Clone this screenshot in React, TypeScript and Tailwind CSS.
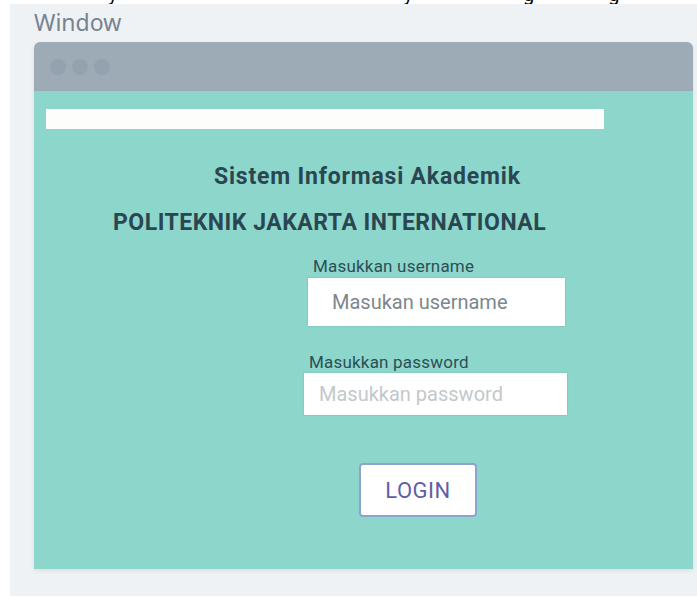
import React from "react";

const Field = ({
  label,
  placeholder,
  labelClass,
  inputClass,
}: {
  label: string;
  placeholder: string;
  labelClass: string;
  inputClass: string;
}) => (
  <div className="flex flex-col">
    <label className={`text-[17px] leading-none tracking-[0.2px] text-[#2c4f55] ${labelClass}`}>
      {label}
    </label>
    <input
      placeholder={placeholder}
      className={`bg-white outline-none text-[20px] shadow-[0_0_2px_rgba(0,0,0,0.15)] ${inputClass}`}
    />
  </div>
);

export default function App() {
  return (
    <div className="w-[697px] h-[597px] bg-white overflow-hidden font-['Roboto',sans-serif]">
      {/* line of text above the panel, cut off so only descenders show */}
      <div className="h-[4px] overflow-hidden">
        <div className="flex text-[20px] leading-none text-black -mt-[16px]">
          <span className="ml-[108px]">y</span>
          <span className="ml-[286px]">y</span>
          <span className="ml-[110px]">g</span>
          <span className="ml-[74px]">g</span>
        </div>
      </div>

      <div className="ml-[10px] h-[592px] bg-[#eef2f5] pl-[24px] pr-[4px] flex flex-col">
        <div className="h-[38px] pt-[7px] text-[23px] leading-none text-[#76838f] font-['Noto_Sans',sans-serif]">
          Window
        </div>

        <div className="h-[527px] rounded-t-[6px] overflow-hidden flex flex-col shadow-[0_2px_4px_rgba(0,0,0,0.08)]">
          {/* title bar with the three dots */}
          <div className="h-[49px] bg-[#9dabb6] flex items-center gap-[6px] pl-[16px]">
            <span className="w-[16px] h-[16px] rounded-full bg-[#93a2ae]" />
            <span className="w-[16px] h-[16px] rounded-full bg-[#93a2ae]" />
            <span className="w-[16px] h-[16px] rounded-full bg-[#93a2ae]" />
          </div>

          <div className="flex-1 bg-[#8dd6cc] flex flex-col">
            <div className="mt-[18px] ml-[12px] w-[558px] h-[20px] bg-[#fdfdfb]" />

            <h1 className="mt-[36px] ml-[180px] text-[23px] leading-none tracking-[0.8px] font-bold text-[#2a4650]">
              Sistem Informasi Akademik
            </h1>
            <h2 className="mt-[23px] ml-[79px] text-[23px] leading-none tracking-[0.5px] font-bold text-[#2a4650]">
              POLITEKNIK JAKARTA INTERNATIONAL
            </h2>

            <div className="mt-[24px] ml-[274px]">
              <Field
                label="Masukkan username"
                placeholder="Masukan username"
                labelClass="ml-[5px] mb-[3px]"
                inputClass="w-[257px] h-[48px] pl-[24px] placeholder:text-[#7b878f]"
              />
            </div>

            <div className="mt-[28px] ml-[270px]">
              <Field
                label="Masukkan password"
                placeholder="Masukkan password"
                labelClass="ml-[5px] mb-[2px]"
                inputClass="w-[263px] h-[42px] pl-[15px] placeholder:text-[#c3c8cb]"
              />
            </div>

            <button className="mt-[48px] ml-[325px] w-[118px] h-[54px] bg-white border-2 border-[#8fa3cf] rounded-[4px] text-[22px] tracking-[0.5px] text-[#625ea6]">
              LOGIN
            </button>
          </div>
        </div>
      </div>
    </div>
  );
}
